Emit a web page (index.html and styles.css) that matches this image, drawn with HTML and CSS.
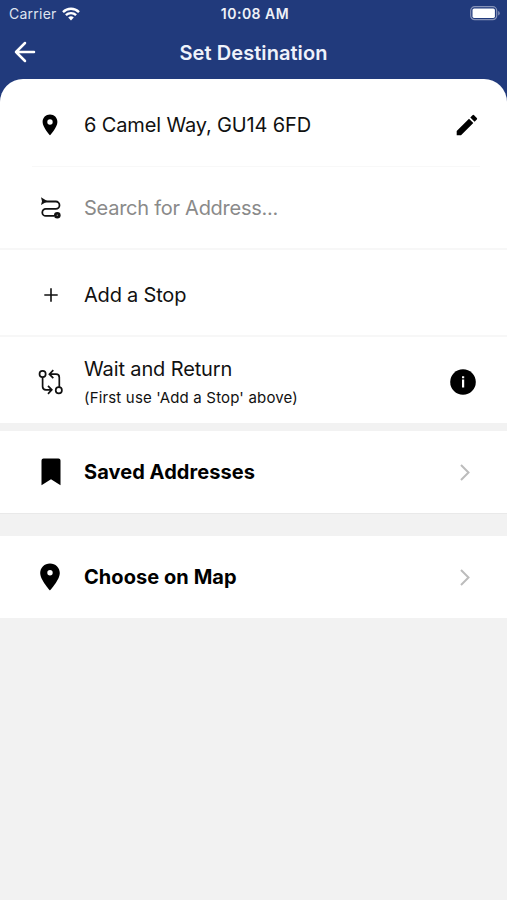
FILE: index.html
```html
<!DOCTYPE html>
<html lang="en">
<head>
<meta charset="utf-8">
<title>Set Destination</title>
<link rel="stylesheet" href="styles.css">
</head>
<body>
<header class="top">
  <div class="status">
    <span class="carrier"><span class="carrier-name">Carrier</span>
      <svg width="18" height="14" viewBox="0 0 18 14" fill="none" stroke="#fff" stroke-width="2.4"><path d="M1 5.1a11.4 11.4 0 0 1 16 0M3.9 8.2a7.3 7.3 0 0 1 10.2 0"/><path d="M6.2 10.5a4 4 0 0 1 5.6 0L9 13.5z" fill="#fff" stroke="none"/></svg>
    </span>
    <span class="time">10:08 AM</span>
    <svg class="battery" width="31" height="15" viewBox="0 0 31 15"><rect x=".7" y=".7" width="26" height="13" rx="4" fill="none" stroke="#8793b8" stroke-width="1.2"/><rect x="2.5" y="2.5" width="22.4" height="9.4" rx="1.6" fill="#fff"/><path d="M28.2 5v4.5q1.5-.6 1.5-2.25T28.2 5z" fill="#8793b8"/></svg>
  </div>
  <div class="nav">
    <svg class="back" width="22" height="22" viewBox="0 0 22 22" fill="none" stroke="#fff" stroke-width="2.5" stroke-linecap="round" stroke-linejoin="round"><path d="M20 11H2M11 2L2 11l9 9"/></svg>
    <h1 class="title">Set Destination</h1>
  </div>
</header>
<main>
  <section class="sheet">
    <div class="row row-current">
      <span class="icon"><svg width="16" height="22" viewBox="0 0 16 22"><path fill-rule="evenodd" d="M8 .6C3.8.6.6 3.8.6 7.9.6 13.3 8 21.3 8 21.3s7.4-8 7.4-13.4C15.4 3.8 12.2.6 8 .6zm0 4.7a2.7 2.7 0 1 1 0 5.400 2.700 2.700 0 0 1 0-5.400z"/></svg></span>
      <span class="label address">6 Camel Way, GU14 6FD</span>
      <svg class="edit" width="22" height="22" viewBox="0 0 22 22"><path d="M.7 17v4.300H5L17.300 9l-4.300-4.300zM20.800 5.500q.8-.8 0-1.600L18.100 1.200q-.8-.8-1.600 0L14.300 3.400l4.300 4.300z"/></svg>
    </div>
    <div class="row row-search">
      <span class="icon nudge"><svg width="22" height="24" viewBox="0 0 22 24" fill="none" stroke="#111" stroke-width="1.800"><path d="M5 5.500h10.800a3.700 3.700 0 0 1 0 7.400H5.800a3.500 3.500 0 0 0 0 7H14"/><path d="M1 1.300L7.500 5.300 1 9l1-3.700z" fill="#111" stroke="none"/><circle cx="17.300" cy="19.200" r="3.300" fill="#111" stroke="none"/><circle cx="17.300" cy="19.200" r=".7" fill="#999" stroke="none"/></svg></span>
      <span class="label search">Search for Address...</span>
    </div>
    <div class="row row-stop">
      <span class="icon nudge"><svg width="14" height="14" viewBox="0 0 14 14" stroke="#111" stroke-width="1.600"><path d="M7 .3v13.400M.3 7h13.400"/></svg></span>
      <span class="label stop">Add a Stop</span>
    </div>
    <div class="row row-wait">
      <span class="icon nudge"><svg width="26" height="26" viewBox="0 0 26 26" fill="none" stroke="#111" stroke-width="1.700"><circle cx="4.600" cy="5" r="3.100"/><circle cx="20.800" cy="21.300" r="3.100"/><path d="M4.600 8v9.500q0 3.300 3.300 3.300H13M10 16.800l3.800 4L10 24.800M21.300 18.300V8.500q0-3.300-3.300-3.300H12M15.300 1.200l-3.900 4 3.900 4"/></svg></span>
      <span class="stack"><span class="label wait">Wait and Return</span><span class="hint">(First use 'Add a Stop' above)</span></span>
      <svg class="info" width="26" height="26" viewBox="0 0 26 26"><circle cx="13" cy="13" r="12.800"/><path d="M12 10.500h2.200v8H12zM12 7.200h2.200v2H12z" fill="#fff"/></svg>
    </div>
  </section>
  <section class="row link saved">
    <span class="icon nudge"><svg width="20" height="28" viewBox="0 0 20 28"><path d="M.5 2.500q0-2 2-2h15q2 0 2 2v24.800L10 21.300.5 27.300z"/></svg></span>
    <span class="label bold saved-label">Saved Addresses</span>
    <svg class="chevron" width="10" height="17" viewBox="0 0 10 17"><path d="M1 1l7.500 7.500L1 16"/></svg>
  </section>
  <section class="row link map">
    <span class="icon"><svg width="20" height="28" viewBox="0 0 20 28"><path fill-rule="evenodd" d="M10 .5C4.500.5.2 4.700.2 10.100.2 17 10 27.500 10 27.500S19.800 17 19.800 10.100C19.800 4.700 15.500.5 10 .5zm0 6.600a2.700 2.700 0 1 1 0 5.400 2.700 2.700 0 0 1 0-5.400z"/></svg></span>
    <span class="label bold map-label">Choose on Map</span>
    <svg class="chevron" width="10" height="17" viewBox="0 0 10 17"><path d="M1 1l7.500 7.500L1 16"/></svg>
  </section>
</main>
</body>
</html>
```
FILE: styles.css
```css
* { box-sizing: border-box; }
body {
  margin: 0;
  min-height: 900px;
  background: #f2f2f2;
  color: #111;
  font-family: Inter, "Liberation Sans", sans-serif;
}
svg { display: block; flex: none; }
.top { height: 102px; background: #213a7c; color: #fff; }
.status {
  height: 27px;
  padding: 0 6px 0 9px;
  display: grid;
  grid-template-columns: 1fr auto 1fr;
  align-items: center;
  font-size: 14px;
  line-height: 18px;
}
.carrier { display: flex; align-items: center; gap: 5px; }
.carrier-name { color: #dfe4f0; letter-spacing: 0.25px; }
.time { margin-right: -2px; font-weight: 600; font-size: 14px; letter-spacing: 0.5px; color: #eef1f8; position: relative; left: -1px; }
.battery { justify-self: end; }
.nav {
  height: 50px;
  padding: 0 14px;
  display: grid;
  grid-template-columns: 1fr auto 1fr;
  align-items: center;
}
.title { margin: 0; padding-top: 1px; font-size: 20px; font-weight: 600; line-height: 26px; letter-spacing: 0.07px; color: #eff2fa; }
.sheet { margin-top: -23px; background: #fff; border-radius: 23px 23px 0 0; }
.row {
  display: flex;
  align-items: center;
  padding: 0 32px 0 30px;
  background: #fff;
}
.icon { width: 40px; margin-right: 14px; display: flex; justify-content: center; flex: none; }
.nudge { margin: 0 13px 0 1px; }
.label { flex: 1; font-size: 20px; line-height: 26px; white-space: nowrap; }
.row-current {
  height: 88px;
  padding-top: 4px;
  padding-right: 29px;
  background: linear-gradient(#f8f8f8, #f8f8f8) 32px 100% / 448px 1px no-repeat;
}
.row-search { height: 83px; background: none; border-bottom: 2px solid #f7f7f7; }
.row-stop { height: 87px; padding-top: 4px; border-bottom: 2px solid #f7f7f7; }
.row-wait { height: 86px; padding-top: 4px; padding-right: 31px; }
.address { letter-spacing: -0.14px; }
.search { color: #8a8a8a; letter-spacing: -0.26px; }
.stop { letter-spacing: -0.2px; }
.wait { letter-spacing: -0.13px; }
.stack { flex: 1; display: flex; flex-direction: column; gap: 5px; padding-top: 1px; }
.stack .label { flex: none; }
.hint { font-size: 15px; line-height: 22px; letter-spacing: 0.17px; white-space: nowrap; }
.link { height: 82px; }
.saved { margin-top: 8px; box-shadow: 0 1px 0 #e9e9e9; }
.map { margin-top: 23px; }
.bold { font-weight: 700; color: #000; letter-spacing: 0.06px; }
.chevron { margin-right: 5px; fill: none; stroke: #bcbcbc; stroke-width: 2; }
```
